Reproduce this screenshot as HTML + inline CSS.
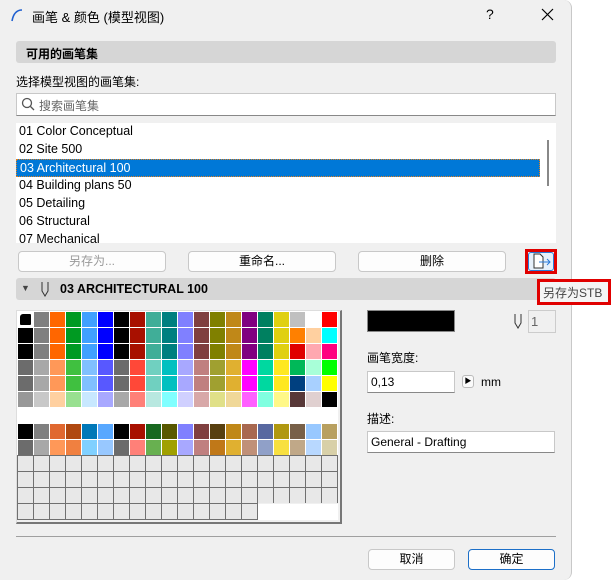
<!DOCTYPE html>
<html><head><meta charset="utf-8"><style>
*{box-sizing:border-box;margin:0;padding:0}
body{width:616px;height:580px;background:#fff;font-family:"Liberation Sans","Noto Sans CJK SC",sans-serif;font-size:12px;color:#000;position:relative;overflow:hidden}
.dlg{position:absolute;left:0;top:0;width:572px;height:580px;background:#f0f0f0;border-right:1px solid #c8c8c8;border-radius:0 8px 8px 0}
.a{position:absolute}
.hdr{background:#d6d6d6;border-radius:3px;font-weight:bold}
.box{background:#fff;border:1px solid #c8c8c8;border-bottom:1px solid #888}
.btn{background:#fdfdfd;border:1px solid #c8c8c8;border-radius:4px;text-align:center;line-height:19px}
#grid{position:absolute;left:18px;top:312px;display:grid;grid-template-columns:repeat(20,15px);grid-auto-rows:15px;gap:1px}
#grid div{width:15px;height:15px}
#grid .e{background:#e8e8e8}
</style></head><body>
<div class="dlg">
 <svg class="a" style="left:10px;top:8px" width="14" height="14"><path d="M2 13 Q4 2 12 2" stroke="#2060d0" stroke-width="1.6" fill="none"/></svg>
 <div class="a" style="left:32px;top:7px;font-size:13px">画笔 &amp; 颜色 (模型视图)</div>
 <div class="a" style="left:486px;top:6px;font-size:14px">?</div>
 <svg class="a" style="left:541px;top:8px" width="13" height="13"><path d="M1 1 L12 12 M12 1 L1 12" stroke="#000" stroke-width="1.2"/></svg>

 <div class="a hdr" style="left:16px;top:41px;width:540px;height:22px;padding:4px 10px">可用的画笔集</div>
 <div class="a" style="left:16px;top:73px">选择模型视图的画笔集:</div>
 <div class="a box" style="left:16px;top:93px;width:540px;height:23px;color:#666;padding:3px 0 0 22px">搜索画笔集</div>
 <svg class="a" style="left:21px;top:97px" width="14" height="14"><circle cx="6" cy="6" r="4.5" stroke="#555" fill="none" stroke-width="1.3"/><path d="M9.5 9.5 L13 13" stroke="#555" stroke-width="1.3"/></svg>
 <div class="a" style="left:16px;top:123px;width:540px;height:120px;background:#fff;overflow:hidden;font-size:12.5px">
  <div style="height:18px;padding:1px 3px">01 Color Conceptual</div>
  <div style="height:18px;padding:1px 3px">02 Site 500</div>
  <div style="height:18px;padding:1px 3px;background:#0078d7;color:#fff;width:524px;border:1px dotted #e08020;line-height:15px">03 Architectural 100</div>
  <div style="height:18px;padding:1px 3px">04 Building plans 50</div>
  <div style="height:18px;padding:1px 3px">05 Detailing</div>
  <div style="height:18px;padding:1px 3px">06 Structural</div>
  <div style="height:18px;padding:1px 3px">07 Mechanical</div>
  <div class="a" style="left:531px;top:17px;width:2px;height:46px;background:#888"></div>
 </div>
 <div class="a btn" style="left:18px;top:251px;width:148px;height:21px;color:#999">另存为...</div>
 <div class="a btn" style="left:188px;top:251px;width:148px;height:21px">重命名...</div>
 <div class="a btn" style="left:358px;top:251px;width:148px;height:21px">删除</div>
 <div class="a" style="left:525px;top:249px;width:32px;height:25px;border:3px solid #e00000"></div>
 <div class="a" style="left:528px;top:252px;width:26px;height:19px;border:1px solid #2a7ad8;border-radius:3px;background:#e6f0fb"></div>
 <svg class="a" style="left:532px;top:253px" width="20" height="17"><path d="M2 1 H8 L11 4 V15 H2 Z" stroke="#333" fill="#fff"/><path d="M7 9 H18 M15 6 L18 9 L15 12" stroke="#2a7ad8" fill="none"/></svg>

 <div class="a hdr" style="left:16px;top:278px;width:540px;height:22px;padding:4px 0 0 44px;font-size:12.5px">03 ARCHITECTURAL 100</div>
 <div class="a" style="left:21px;top:283px;font-size:9px;color:#444">▼</div>
 <svg class="a" style="left:40px;top:281px" width="10" height="16"><path d="M2 1 V10 L5 15 L8 10 V1" stroke="#333" fill="none"/></svg>

 <div class="a" style="left:16px;top:310px;width:326px;height:214px;border:1px solid #ddd;border-right:2px solid #777;border-bottom:2px solid #777;background:#f0f0f0"></div>
 <div class="a" style="left:17px;top:311px;width:321px;height:144px;background:#fff"></div>
 <div class="a" style="left:17px;top:455px;width:321px;height:48px;background:#707070"></div>
 <div class="a" style="left:17px;top:503px;width:241px;height:17px;background:#707070"></div>
 <div class="a" style="left:258px;top:504px;width:80px;height:16px;background:#fff"></div>
 <div id="grid"></div>

 <div class="a" style="left:367px;top:310px;width:88px;height:22px;background:#000;border:1px solid #888"></div>
 <svg class="a" style="left:513px;top:313px" width="10" height="16"><path d="M2 1 V10 L5 15 L8 10 V1" stroke="#333" fill="none"/></svg>
 <div class="a" style="left:528px;top:310px;width:28px;height:23px;border:1px solid #ccc;background:#f0f0f0;color:#666;padding:3px 2px;font-size:13px">1</div>
 <div class="a" style="left:367px;top:349px">画笔宽度:</div>
 <div class="a box" style="left:367px;top:371px;width:88px;height:22px;padding:3px 3px">0,13</div>
 <div class="a" style="left:462px;top:375px;width:12px;height:13px;border:1px solid #bbb;border-radius:3px;background:#fafafa;font-size:7px;text-align:center;line-height:11px">▶</div>
 <div class="a" style="left:481px;top:375px">mm</div>
 <div class="a" style="left:367px;top:410px">描述:</div>
 <div class="a box" style="left:367px;top:431px;width:188px;height:22px;padding:3px 3px">General - Drafting</div>

 <div class="a" style="left:16px;top:536px;width:540px;height:1px;background:#a0a0a0"></div>
 <div class="a btn" style="left:368px;top:549px;width:87px;height:21px">取消</div>
 <div class="a btn" style="left:468px;top:549px;width:87px;height:21px;border-color:#1c6fc8">确定</div>
</div>
<div class="a" style="left:537px;top:279px;width:74px;height:26px;border:3px solid #e00000;background:#f4f4f4;color:#444;padding:2px 3px;font-size:12px">另存为STB</div>
<script>
var R=[
"000,808080,ff6600,009a22,40a0ff,0000ff,000,a81000,40ae98,008080,8080ff,804040,808000,c08818,800080,008060,e0d010,c0c0c0,fff,ff0000",
"000,808080,ff6600,009a22,40a0ff,0000ff,000,a81000,40ae98,008080,8080ff,804040,808000,c08818,800080,008060,e0d010,ff8000,ffd0a0,00ffff",
"000,808080,ff6600,009a22,40a0ff,0000ff,000,a81000,40ae98,008080,8080ff,804040,808000,c08818,800080,008060,e0d010,e00000,ffa8b0,ff0080",
"6c6c6c,a8a8a8,ff9858,40c040,80c0ff,5858ff,6c6c6c,ff4838,70d0c0,00c0c0,a8a8ff,c08080,a0a030,e0b030,ff00ff,00d8a0,ffe820,00b858,a8ffd8,00ff00",
"6c6c6c,a8a8a8,ff9858,40c040,80c0ff,5858ff,6c6c6c,ff4838,70d0c0,00c0c0,a8a8ff,c08080,a0a030,e0b030,ff00ff,00d8a0,ffe820,004080,a8d0ff,ffff00",
"989898,c8c8c8,ffd0a0,98e090,c8e8ff,a8a8ff,a8a8a8,ff8078,b8e8e0,80ffff,d0d0ff,d8a8a8,e0e088,f0d898,ff60ff,80ffe0,fff888,583838,e0d0d0,000",
"fff,fff,fff,fff,fff,fff,fff,fff,fff,fff,fff,fff,fff,fff,fff,fff,fff,fff,fff,fff",
"000,808080,e06830,b04810,0078b8,58a8ff,000,a81000,186820,585800,8080ff,804040,584010,c08818,a86850,5868a0,b09810,786048,98c8ff,b8a060",
"6c6c6c,a8a8a8,ff9858,f08040,80d0ff,98c8ff,6c6c6c,ff8078,68b050,a0a000,a8a8ff,c08080,c07818,e0b030,c09078,90a0c8,f8e040,c0a888,b8d8ff,d8d0a8"];
var g=document.getElementById('grid'),h='';
R.forEach(function(r,i){r.split(',').forEach(function(c,j){
 if(i==0&&j==0)h+='<div style="background:#fff;padding:2px"><div style="width:11px;height:11px;background:#000;border-radius:3px 1px 1px 1px"></div></div>';
 else h+='<div style="background:#'+c+'"></div>';});});
for(var i=0;i<75;i++)h+='<div class="e"></div>';
g.innerHTML=h;
</script>
</body></html>
